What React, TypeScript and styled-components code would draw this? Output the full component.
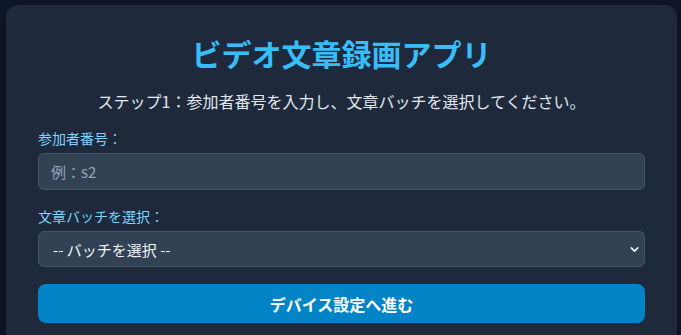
import { FC } from 'react';
import styled, { createGlobalStyle } from 'styled-components';
import { ChevronDown } from 'lucide-react';

const GlobalStyle = createGlobalStyle`
  html, body {
    margin: 0;
    padding: 0;
    background: #0f172a;
  }
  body {
    font-family: 'Noto Sans CJK JP', 'Noto Sans', sans-serif;
    color: #e2e8f0;
  }
  * {
    box-sizing: border-box;
  }
`;

const Page = styled.div`
  padding: 5px 4px 0 6px;
`;

const Card = styled.div`
  width: 671px;
  min-height: 400px;
  background: #1e293b;
  border-radius: 12px;
  padding: 30px 32px 32px;
  box-shadow: 0 4px 16px rgba(0, 0, 0, 0.35);
`;

const Title = styled.h1`
  margin: 0;
  font-size: 30px;
  line-height: 36px;
  font-weight: 700;
  color: #38bdf8;
  text-align: center;
`;

const Subtitle = styled.p`
  margin: 18px 0 15px;
  font-size: 16px;
  line-height: 24px;
  color: #e2e8f0;
  text-align: center;
`;

const Field = styled.div`
  display: flex;
  flex-direction: column;
  gap: 5px;
  margin-bottom: 16px;
`;

const Label = styled.label`
  font-size: 14px;
  line-height: 20px;
  color: #7dd3fc;
`;

const TextInput = styled.input`
  height: 37px;
  width: 100%;
  padding: 0 12px;
  font-family: inherit;
  font-size: 15px;
  color: #f1f5f9;
  background: #334155;
  border: 1px solid #475569;
  border-radius: 6px;
  outline: none;

  &::placeholder {
    color: #94a3b8;
  }
`;

const SelectWrap = styled.div`
  position: relative;
`;

const Select = styled.select`
  appearance: none;
  -webkit-appearance: none;
  display: block;
  height: 36px;
  width: 100%;
  padding-top: 0;
  padding-bottom: 0;
  padding-left: 14px;
  padding-right: 32px;
  font-family: inherit;
  font-size: 15px;
  color: #f1f5f9;
  background: #334155;
  border: 1px solid #475569;
  border-radius: 6px;
  outline: none;
`;

const Chevron = styled(ChevronDown)`
  position: absolute;
  right: 4px;
  top: 12px;
  pointer-events: none;
  color: #f1f5f9;
`;

const PrimaryButton = styled.button`
  display: block;
  width: 100%;
  height: 39px;
  margin-top: 17px;
  font-family: inherit;
  font-size: 16px;
  font-weight: 700;
  color: #ffffff;
  background: #0284c7;
  border: none;
  border-radius: 8px;
  cursor: pointer;
`;

const App: FC = () => {
  return (
    <>
      <GlobalStyle />
      <Page>
        <Card>
          <Title>ビデオ文章録画アプリ</Title>
          <Subtitle>ステップ1：参加者番号を入力し、文章バッチを選択してください。</Subtitle>
          <Field>
            <Label htmlFor="participant">参加者番号：</Label>
            <TextInput id="participant" type="text" placeholder="例：s2" />
          </Field>
          <Field>
            <Label htmlFor="batch">文章バッチを選択：</Label>
            <SelectWrap>
              <Select id="batch" defaultValue="">
                <option value="">-- バッチを選択 --</option>
                <option value="1">バッチ 1</option>
                <option value="2">バッチ 2</option>
              </Select>
              <Chevron size={13} strokeWidth={3} />
            </SelectWrap>
          </Field>
          <PrimaryButton type="button">デバイス設定へ進む</PrimaryButton>
        </Card>
      </Page>
    </>
  );
};

export default App;
